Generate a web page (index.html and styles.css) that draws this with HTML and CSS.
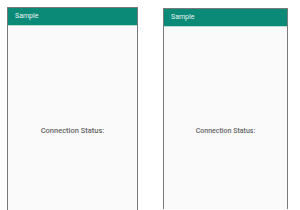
FILE: index.html
```html
<!DOCTYPE html>
<html lang="en">
<head>
  <meta charset="UTF-8">
  <title>Sample</title>
  <link rel="stylesheet" href="styles.css">
</head>
<body>
<div class="screens">
  <div class="phone phone-left">
    <div class="app-bar">Sample</div>
    <div class="content">
      <span class="status">Connection Status:</span>
    </div>
  </div>

  <div class="phone phone-right">
    <div class="app-bar">Sample</div>
    <div class="content">
      <span class="status">Connection Status:</span>
    </div>
  </div>
</div>
</body>
</html>
```

FILE: styles.css
```css
* {
  box-sizing: border-box;
}

body {
  margin: 0;
  padding: 0;
  background-color: #fff;
  font-family: Roboto, 'Liberation Sans', sans-serif;
  overflow: hidden;
  height: 210px;
}

.screens {
  display: flex;
  align-items: flex-start;
  gap: 25px;
  padding: 7px 0 0 7px;
}

.phone {
  background-color: #fafafa;
  border: 1px solid #7a7a7a;
  border-bottom: none;
  display: flex;
  flex-direction: column;
}

.phone-left {
  width: 131px;
  height: 203px;
}

.phone-right {
  width: 125px;
  height: 201px;
  margin-top: 1px;
}

.app-bar {
  background-color: #0b8a78;
  color: #e8f4f1;
  font-size: 7px;
  height: 18px;
  line-height: 17px;
  padding-left: 7px;
  border-bottom: 1px solid #b9dcd6;
}

.content {
  flex: 1;
  display: flex;
  justify-content: center;
  padding-top: 100px;
}

.status {
  color: #666;
  font-size: 7.5px;
  font-weight: 500;
}

.phone-right .status {
  font-size: 7px;
}
```
